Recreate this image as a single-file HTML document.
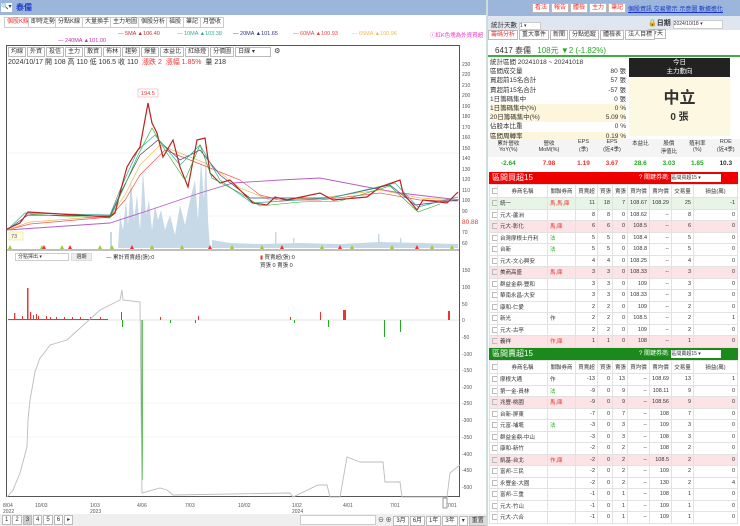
<!DOCTYPE html>
<html><head><meta charset="utf-8">
<style>
*{box-sizing:border-box;margin:0;padding:0}
body{width:740px;height:526px;overflow:hidden;background:#fff;font-family:"Liberation Sans","Noto Sans CJK TC",sans-serif;font-size:7px;color:#333;position:relative}
.abs{position:absolute}
.tab{position:absolute;top:17px;height:11px;border:1px solid #ccc;background:#fff;font-size:6px;line-height:9px;padding:0 2px;color:#333}
.btn{display:inline-block;border:1px solid #bbb;padding:0 2px;font-size:6px;line-height:8px;margin-right:1px;background:#fff}
table{border-collapse:collapse;width:100%;table-layout:fixed}
td,th{border:1px solid #e2e2e2;font-size:5.5px;height:11.5px;padding:0 2px;text-align:right;font-weight:normal;white-space:nowrap;overflow:hidden}
th{text-align:center;background:#fff;height:13px}
td.l{text-align:left}
tr.pk td{background:#fbe3e6}
tr.gr td{background:#e8f5e6}
.cb{display:inline-block;width:6px;height:6px;border:1px solid #bbb;vertical-align:middle}
.r{color:#e33}.g{color:#2a2}
</style></head><body>
<div class="abs" style="left:0;top:0;width:486px;height:15px;background:#9bb6da"></div>
<div class="abs" style="left:1px;top:3px;width:11px;height:9px;background:#fff;font-size:6px;line-height:9px">🔍▾</div>
<div class="abs" style="left:16px;top:2px;color:#1a35c9;font-size:8px;font-weight:bold">泰儒</div>
<div class="tab" style="left:4px;color:#e33">個股K線</div>
<div class="tab" style="left:28px">即時走勢</div>
<div class="tab" style="left:55px">分點K線</div>
<div class="tab" style="left:82px">大量換手</div>
<div class="tab" style="left:110px">主力地圖</div>
<div class="tab" style="left:138px">個股分析</div>
<div class="tab" style="left:166px">福股</div>
<div class="tab" style="left:183px">筆記</div>
<div class="tab" style="left:200px">月營收</div>
<div class="abs" style="top:31px;left:118px;font-size:5.5px;color:#b33">— 5MA ▲106.40</div>
<div class="abs" style="top:31px;left:177px;font-size:5.5px;color:#3a9">— 10MA ▲103.38</div>
<div class="abs" style="top:31px;left:233px;font-size:5.5px;color:#338">— 20MA ▲101.65</div>
<div class="abs" style="top:31px;left:293px;font-size:5.5px;color:#e44">— 60MA ▲100.93</div>
<div class="abs" style="top:31px;left:352px;font-size:5.5px;color:#eb5">— 65MA ▲100.96</div>
<div class="abs" style="top:31px;left:430px;font-size:5.5px;color:#e3c">ⓘ紅K色塊為外資買超</div>
<div class="abs" style="top:38px;left:58px;font-size:5.5px;color:#b3a">— 240MA ▲101.00</div>
<div class="abs" style="left:6px;top:45px;width:454px;height:452px;border:1px solid #555"></div>
<div class="abs" style="left:8px;top:47px;white-space:nowrap">
<span class="btn">均線</span><span class="btn">外資</span><span class="btn">投信</span><span class="btn">主力</span><span class="btn">散資</span><span class="btn">佈林</span><span class="btn">趨勢</span><span class="btn">爆量</span><span class="btn">本益比</span><span class="btn">紅綠燈</span><span class="btn">分價圖</span><span class="btn" style="width:36px">日線 ▾</span> ⚙</div>
<div class="abs" style="left:8px;top:57px;font-size:7px">2024/10/17 開 108 高 110 低 106.5 收 110 &nbsp;<span class="r">漲跌 2 &nbsp;漲幅 1.85%</span> &nbsp;量 218</div>
<svg class="abs" style="left:0;top:0" width="486" height="526">
<g stroke="#eee" stroke-width="0.6">
<line x1="7" y1="153" x2="459" y2="153"/><line x1="7" y1="216" x2="459" y2="216"/>
<line x1="7" y1="370" x2="459" y2="370"/><line x1="7" y1="403" x2="459" y2="403"/><line x1="7" y1="437" x2="459" y2="437"/></g>
<g fill="#c7d9e6">
<path d="M118 248 L120 215 L123 230 L126 200 L128 225 L131 180 L134 220 L137 195 L140 230 L143 170 L146 215 L149 200 L152 230 L155 205 L158 220 L161 210 L165 230 L170 215 L175 235 L180 205 L185 225 L190 200 L195 180 L198 220 L201 160 L204 200 L206 150 L208 220 L210 248 Z"/>
<rect x="110" y="232" width="2" height="16"/><rect x="275" y="232" width="1.5" height="16"/><rect x="293" y="238" width="1.5" height="10"/><rect x="378" y="234" width="1.5" height="14"/><rect x="400" y="238" width="1.5" height="10"/>
<path d="M212 248 L212 240 L230 243 L260 244 L300 243 L340 244 L380 242 L420 243 L458 244 L458 248Z"/></g>
<polyline fill="none" stroke="#b55fc5" stroke-width="0.9" points="7,230 110,223 150,210 200,193 233,183 280,180 320,178 367,187 400,193 460,200"/>
<polyline fill="none" stroke="#e55" stroke-width="0.7" points="7,230 30,224 110,217 125,200 140,175 165,150 190,160 215,170 240,180 260,195 280,200 320,200 380,193 420,200 458,201"/>
<polyline fill="none" stroke="#eb5" stroke-width="0.7" points="7,230 30,222 110,216 125,195 140,165 160,145 185,155 210,165 240,188 270,200 320,198 380,190 420,198 458,200"/>
<polyline fill="none" stroke="#447" stroke-width="0.7" points="7,230 28,215 110,216 122,190 140,155 158,140 180,160 200,150 220,175 250,198 330,198 390,185 415,205 458,200"/>
<polyline fill="none" stroke="#3a9" stroke-width="0.7" points="7,230 25,213 110,215 120,190 138,150 155,135 180,165 200,145 220,180 252,203 330,198 395,183 418,207 458,197"/>
<polyline fill="none" stroke="#b22" stroke-width="1.2" points="7,229 20,223 28,212 60,214 110,217 115,213 120,193 127,167 133,157 140,147 148,103 152,123 157,133 163,157 173,140 180,167 188,187 197,140 205,138 210,173 220,183 230,180 240,190 253,203 267,205 275,197 287,200 320,193 333,200 367,197 380,187 400,180 403,193 417,210 423,200 447,203 458,192"/>
<polyline fill="none" stroke="#2a2" stroke-width="0.6" points="30,214 60,216 110,218 125,185 138,155 152,128 165,150 185,180 200,145 212,178 240,193 260,206 300,202 340,201 390,186 418,212 440,204"/>
<rect x="138" y="89" width="20" height="8" fill="#fff" stroke="#e99" stroke-width="0.5"/><text x="141" y="95" font-size="5.5" fill="#e33">194.5</text>
<rect x="9" y="232" width="14" height="8" fill="#fffbe0" stroke="#dd8" stroke-width="0.5"/><text x="11" y="238" font-size="5.5" fill="#555">73</text>
<g font-size="5" fill="#555"><text x="462" y="66">230</text><text x="462" y="76">220</text><text x="462" y="87">210</text><text x="462" y="97">200</text><text x="462" y="108">190</text><text x="462" y="118">180</text><text x="462" y="129">170</text><text x="462" y="139">160</text><text x="462" y="150">150</text><text x="462" y="160">140</text><text x="462" y="171">130</text><text x="462" y="181">120</text><text x="462" y="192">110</text><text x="462" y="202">100</text><text x="462" y="213">90</text><text x="462" y="234">70</text><text x="462" y="245">60</text>
<text x="462" y="272">150</text><text x="462" y="289">100</text><text x="462" y="306">50</text><text x="462" y="322">0</text><text x="462" y="339">-50</text><text x="462" y="356">-100</text><text x="462" y="372">-150</text><text x="462" y="389">-200</text><text x="462" y="405">-250</text><text x="462" y="422">-300</text><text x="462" y="439">-350</text><text x="462" y="456">-400</text><text x="462" y="472">-450</text><text x="462" y="489">-500</text></g>
<text x="462" y="224" font-size="6.5" fill="#e33">80.88</text>
<g fill="#9c3">
<path d="M8 249l2-4 2 4z M40 249l2-4 2 4z M60 249l2-4 2 4z M98 249l2-4 2 4z M110 249l2-4 2 4z M150 249l2-4 2 4z M180 249l2-4 2 4z M230 249l2-4 2 4z M260 249l2-4 2 4z M320 249l2-4 2 4z M350 249l2-4 2 4z M390 249l2-4 2 4z M430 249l2-4 2 4z M450 249l2-4 2 4z"/></g>
<g fill="#e33"><path d="M42 249l2-4 2 4z M68 249l2-4 2 4z M130 249l2-4 2 4z M208 249l2-4 2 4z M280 249l2-4 2 4z M338 249l2-4 2 4z M415 249l2-4 2 4z"/></g>
<line x1="7" y1="250" x2="459" y2="250" stroke="#555" stroke-width="0.8"/>
<line x1="7" y1="320" x2="459" y2="320" stroke="#ccc" stroke-width="0.5"/>
<g fill="#e33"><rect x="27" y="288" width="1.5" height="32"/><rect x="14" y="313" width="1.3" height="7"/><rect x="22" y="316" width="1" height="4"/><rect x="30" y="312" width="1.2" height="8"/><rect x="33" y="315" width="1" height="5"/><rect x="36" y="314" width="1" height="6"/><rect x="38" y="316" width="1" height="4"/><rect x="46" y="316" width="1" height="4"/><rect x="50" y="317" width="1" height="3"/><rect x="56" y="317" width="1" height="3"/><rect x="64" y="317" width="1" height="3"/><rect x="72" y="317" width="1" height="3"/><rect x="80" y="317" width="1" height="3"/><rect x="90" y="317" width="1" height="3"/><rect x="100" y="317" width="1" height="3"/><rect x="121" y="312" width="1" height="8"/><rect x="160" y="317" width="1" height="3"/><rect x="198" y="316" width="1" height="4"/><rect x="290" y="317" width="1" height="3"/><rect x="320" y="312" width="1" height="8"/><rect x="343" y="310" width="3" height="10"/><rect x="448" y="311" width="2" height="9"/>
<rect x="8" y="319" width="100" height="1"/></g>
<g fill="#2a2"><rect x="141.5" y="320" width="1.2" height="160"/><rect x="122" y="320" width="1" height="7"/><rect x="328" y="320" width="1" height="7"/><rect x="384" y="320" width="1" height="17"/><rect x="400" y="320" width="1" height="12"/><rect x="294" y="320" width="1" height="3"/><rect x="170" y="320" width="1" height="3"/><rect x="195" y="320" width="1" height="3"/></g>
<polyline fill="none" stroke="#bbb" stroke-width="0.9" points="7,497 13,490 20,473 27,447 28,420 30,400 35,372 40,358 45,352 50,345 67,340 100,310 120,300 122,290 123,300 140,302 142,493 160,488 167,490 173,495 290,493 293,497 318,485 327,485 330,497 340,497 347,457 360,462 383,462 385,482 400,482 402,497 447,497 450,473 460,465"/>
<g font-size="5" fill="#555"><text x="3" y="507">8/04</text><text x="3" y="513">2022</text><text x="35" y="507">10/03</text><text x="90" y="507">1/03</text><text x="90" y="513">2023</text><text x="137" y="507">4/06</text><text x="185" y="507">7/03</text><text x="238" y="507">10/02</text><text x="292" y="507">1/02</text><text x="292" y="513">2024</text><text x="343" y="507">4/01</text><text x="390" y="507">7/01</text><text x="447" y="507">7/01</text></g>
<rect x="443" y="498" width="4" height="10" fill="#fff" stroke="#555" stroke-width="0.6"/>
</svg>
<div class="abs" style="left:15px;top:253px;width:54px;height:8px;border:1px solid #ccc;font-size:5px;line-height:6px;padding-left:2px">分點擇出 ▾</div>
<div class="abs" style="left:71px;top:253px;width:21px;height:8px;background:#eee;border:1px solid #ddd;font-size:5px;text-align:center;line-height:6px">週期</div>
<div class="abs" style="left:106px;top:253px;font-size:5.5px">— 累計買賣超(張):0</div>
<div class="abs" style="left:260px;top:253px;font-size:5.5px"><span style="color:#e33">▮</span> 買賣超(張):0<br>買張 0 賣張 0</div>
<div class="abs" style="left:0;top:514px;width:486px;height:12px;background:#efefef"></div>
<div class="abs" style="left:2px;top:515px;font-size:6px"><span class="btn">1</span><span class="btn">2</span><span class="btn" style="background:#ccc">3</span><span class="btn">4</span><span class="btn">5</span><span class="btn">6</span><span class="btn">▸</span></div>
<div class="abs" style="left:300px;top:515px;width:76px;height:10px;background:#fff;border:1px solid #ccc"></div>
<div class="abs" style="left:378px;top:515px;font-size:6px">⊖ ⊕ <span class="btn">3月</span><span class="btn">6月</span><span class="btn">1年</span><span class="btn">3年</span><span class="btn">▾</span><span class="btn" style="background:#ddd">重置</span></div>
<div class="abs" style="left:486px;top:0;width:2px;height:526px;background:#cdd"></div>
<div class="abs" style="left:488px;top:0;width:252px;height:16px;background:#9bb6da"></div>
<div class="abs" style="left:532px;top:3px;font-size:6px;color:#e33"><span class="btn" style="color:#e33">看法</span><span class="btn" style="color:#e33">報告</span><span class="btn" style="color:#e33">體檢</span><span class="btn" style="color:#e33">主力</span><span class="btn" style="color:#e33">筆記</span></div>
<div class="abs" style="left:628px;top:4px;font-size:6px;color:#1a35c9;text-decoration:underline">個股資訊 交易警示 示意圖 數據進化</div>
<div class="abs" style="left:488px;top:16px;width:252px;height:14px;background:#dfe6ef"></div>
<div class="abs" style="left:491px;top:19px;font-size:6.5px">統計天數 <span style="display:inline-block;width:22px;height:8px;background:#fff;border:1px solid #ccc;font-size:5px">1 ▾</span></div>
<div class="abs" style="left:648px;top:18px;font-size:7px">🔒<b>日期</b> <span style="display:inline-block;width:50px;height:9px;background:#fff;border:1px solid #ccc;font-size:5px;font-weight:normal">2024/10/18 ▾</span> <span class="btn">今天</span></div>
<div class="abs" style="left:488px;top:30px;font-size:6px"><span class="btn" style="color:#e33">籌碼分析</span><span class="btn">重大事件</span><span class="btn">新聞</span><span class="btn">分點追蹤</span><span class="btn">體檢表</span><span class="btn">法人目標</span></div>
<div class="abs" style="left:488px;top:42px;width:252px;height:15px;border-bottom:2px solid #4a4;font-size:8px;padding:3px 0 0 7px">6417 泰儒 <span style="color:#2a2;margin-left:4px">108元 ▼2 (-1.82%)</span></div>
<div class="abs" style="left:490px;top:58px;width:136px;font-size:6.5px;line-height:9.2px">
<div>統計區間 20241018 ~ 20241018</div>
<div>區間成交量<span style="float:right">80 張</span></div>
<div>買超前15名合計<span style="float:right">57 張</span></div>
<div>賣超前15名合計<span style="float:right">-57 張</span></div>
<div>1日籌碼集中<span style="float:right">0 張</span></div>
<div style="background:#fdf5dc">1日籌碼集中(%)<span style="float:right">0 %</span></div>
<div style="background:#fdf5dc">20日籌碼集中(%)<span style="float:right">5.09 %</span></div>
<div>佔股本比重<span style="float:right">0 %</span></div>
<div style="background:#fdf5dc">區間周轉率<span style="float:right">0.19 %</span></div></div>
<div class="abs" style="left:629px;top:58px;width:101px;height:19px;background:#222;color:#fff;text-align:center;font-size:6.5px;line-height:9px">今日<br>主力動向</div>
<div class="abs" style="left:629px;top:77px;width:101px;height:59px;background:#fdf8e2;text-align:center;font-weight:bold"><div style="font-size:16px;padding-top:7px">中立</div><div style="font-size:10px">0 張</div></div>
<div class="abs" style="left:488px;top:139px;width:252px;height:32px;font-size:5.5px;text-align:center">
<div style="display:flex;height:18px;background:#f4f4f4">
<div style="flex:1">累計營收<br>YoY(%)</div><div style="flex:1">營收<br>MoM(%)</div><div style="flex:.7">EPS<br>(季)</div><div style="flex:.7">EPS<br>(近4季)</div><div style="flex:.7">本益比</div><div style="flex:.7">股價<br>淨值比</div><div style="flex:.7">殖利率<br>(%)</div><div style="flex:.7">ROE<br>(近4季)</div></div>
<div style="display:flex;font-weight:bold;font-size:6.5px;padding-top:3px">
<div style="flex:1" class="g">-2.64</div><div style="flex:1" class="r">7.98</div><div style="flex:.7" class="r">1.19</div><div style="flex:.7" class="r">3.67</div><div style="flex:.7" class="g">28.6</div><div style="flex:.7" class="g">3.03</div><div style="flex:.7" class="g">1.85</div><div style="flex:.7">10.3</div></div></div>
<div class="abs" style="left:489px;top:172px;width:249px;height:12px;background:#e00;color:#fff;font-size:8px;padding-left:3px;line-height:12px">區間買超15<span style="position:absolute;left:150px;font-size:6px">? 關鍵券商: <span style="display:inline-block;width:50px;height:8px;background:#fff;color:#333;font-size:5px;line-height:8px">區間買超15 ▾</span></span></div>
<div class="abs" style="left:489px;top:184px;width:249px">
<table><colgroup><col style="width:8px"><col style="width:50px"><col style="width:28px"><col style="width:22px"><col style="width:15px"><col style="width:15px"><col style="width:22px"><col style="width:22px"><col style="width:22px"><col></colgroup>
<tr><th><span class="cb"></span></th><th>券商名稱</th><th>關聯券商</th><th>買賣超</th><th>買張</th><th>賣張</th><th>買均價</th><th>賣均價</th><th>交易量</th><th>損益(萬)</th></tr>
<tr class="gr"><td><span class="cb"></span></td><td class="l">統一</td><td class="l r">馬,馬,庫</td><td>11</td><td>18</td><td>7</td><td>108.67</td><td>108.29</td><td>25</td><td>-1</td></tr>
<tr><td><span class="cb"></span></td><td class="l">元大-蘆洲</td><td></td><td>8</td><td>8</td><td>0</td><td>108.62</td><td>--</td><td>8</td><td>0</td></tr>
<tr class="pk"><td><span class="cb"></span></td><td class="l">元大-彰化</td><td class="l r">馬,庫</td><td>6</td><td>6</td><td>0</td><td>108.5</td><td>--</td><td>6</td><td>0</td></tr>
<tr><td><span class="cb"></span></td><td class="l">台灣摩根士丹利</td><td class="l g">法</td><td>5</td><td>5</td><td>0</td><td>108.4</td><td>--</td><td>5</td><td>0</td></tr>
<tr><td><span class="cb"></span></td><td class="l">台新</td><td class="l g">法</td><td>5</td><td>5</td><td>0</td><td>108.8</td><td>--</td><td>5</td><td>0</td></tr>
<tr><td><span class="cb"></span></td><td class="l">元大-文心興安</td><td></td><td>4</td><td>4</td><td>0</td><td>108.25</td><td>--</td><td>4</td><td>0</td></tr>
<tr class="pk"><td><span class="cb"></span></td><td class="l">美商高盛</td><td class="l r">馬,庫</td><td>3</td><td>3</td><td>0</td><td>108.33</td><td>--</td><td>3</td><td>0</td></tr>
<tr><td><span class="cb"></span></td><td class="l">群益金鼎-豐和</td><td></td><td>3</td><td>3</td><td>0</td><td>109</td><td>--</td><td>3</td><td>0</td></tr>
<tr><td><span class="cb"></span></td><td class="l">華南永昌-大安</td><td></td><td>3</td><td>3</td><td>0</td><td>108.33</td><td>--</td><td>3</td><td>0</td></tr>
<tr><td><span class="cb"></span></td><td class="l">康和-仁愛</td><td></td><td>2</td><td>2</td><td>0</td><td>109</td><td>--</td><td>2</td><td>0</td></tr>
<tr><td><span class="cb"></span></td><td class="l">新光</td><td class="l">作</td><td>2</td><td>2</td><td>0</td><td>108.5</td><td>--</td><td>2</td><td>1</td></tr>
<tr><td><span class="cb"></span></td><td class="l">元大-古亭</td><td></td><td>2</td><td>2</td><td>0</td><td>109</td><td>--</td><td>2</td><td>0</td></tr>
<tr class="pk"><td><span class="cb"></span></td><td class="l">義祥</td><td class="l r">作,庫</td><td>1</td><td>1</td><td>0</td><td>108</td><td>--</td><td>1</td><td>0</td></tr>
</table></div>
<div class="abs" style="left:489px;top:348px;width:249px;height:12px;background:#1a8a1a;color:#fff;font-size:8px;padding-left:3px;line-height:12px">區間賣超15<span style="position:absolute;left:150px;font-size:6px">? 關鍵券商: <span style="display:inline-block;width:50px;height:8px;background:#fff;color:#333;font-size:5px;line-height:8px">區間賣超15 ▾</span></span></div>
<div class="abs" style="left:489px;top:360px;width:249px">
<table><colgroup><col style="width:8px"><col style="width:50px"><col style="width:28px"><col style="width:22px"><col style="width:15px"><col style="width:15px"><col style="width:22px"><col style="width:22px"><col style="width:22px"><col></colgroup>
<tr><th><span class="cb"></span></th><th>券商名稱</th><th>關聯券商</th><th>買賣超</th><th>買張</th><th>賣張</th><th>買均價</th><th>賣均價</th><th>交易量</th><th>損益(萬)</th></tr>
<tr><td><span class="cb"></span></td><td class="l">摩根大通</td><td class="l">作</td><td>-13</td><td>0</td><td>13</td><td>--</td><td>108.69</td><td>13</td><td>1</td></tr>
<tr><td><span class="cb"></span></td><td class="l">第一金-員林</td><td class="l g">法</td><td>-9</td><td>0</td><td>9</td><td>--</td><td>108.11</td><td>9</td><td>0</td></tr>
<tr class="pk"><td><span class="cb"></span></td><td class="l">兆豐-桃園</td><td class="l r">馬,庫</td><td>-9</td><td>0</td><td>9</td><td>--</td><td>108.56</td><td>9</td><td>0</td></tr>
<tr><td><span class="cb"></span></td><td class="l">台新-屏東</td><td></td><td>-7</td><td>0</td><td>7</td><td>--</td><td>108</td><td>7</td><td>0</td></tr>
<tr><td><span class="cb"></span></td><td class="l">元富-埔墘</td><td class="l g">法</td><td>-3</td><td>0</td><td>3</td><td>--</td><td>109</td><td>3</td><td>0</td></tr>
<tr><td><span class="cb"></span></td><td class="l">群益金鼎-中山</td><td></td><td>-3</td><td>0</td><td>3</td><td>--</td><td>108</td><td>3</td><td>0</td></tr>
<tr><td><span class="cb"></span></td><td class="l">康和-新竹</td><td></td><td>-2</td><td>0</td><td>2</td><td>--</td><td>108</td><td>2</td><td>0</td></tr>
<tr class="pk"><td><span class="cb"></span></td><td class="l">凱基-台北</td><td class="l r">作,庫</td><td>-2</td><td>0</td><td>2</td><td>--</td><td>108.5</td><td>2</td><td>0</td></tr>
<tr><td><span class="cb"></span></td><td class="l">富邦-三民</td><td></td><td>-2</td><td>0</td><td>2</td><td>--</td><td>109</td><td>2</td><td>0</td></tr>
<tr><td><span class="cb"></span></td><td class="l">永豐金-大園</td><td></td><td>-2</td><td>0</td><td>2</td><td>--</td><td>130</td><td>2</td><td>4</td></tr>
<tr><td><span class="cb"></span></td><td class="l">富邦-三重</td><td></td><td>-1</td><td>0</td><td>1</td><td>--</td><td>108</td><td>1</td><td>0</td></tr>
<tr><td><span class="cb"></span></td><td class="l">元大-竹山</td><td></td><td>-1</td><td>0</td><td>1</td><td>--</td><td>109</td><td>1</td><td>0</td></tr>
<tr><td><span class="cb"></span></td><td class="l">元大-六合</td><td></td><td>-1</td><td>0</td><td>1</td><td>--</td><td>109</td><td>1</td><td>0</td></tr>
</table></div>
</body></html>
